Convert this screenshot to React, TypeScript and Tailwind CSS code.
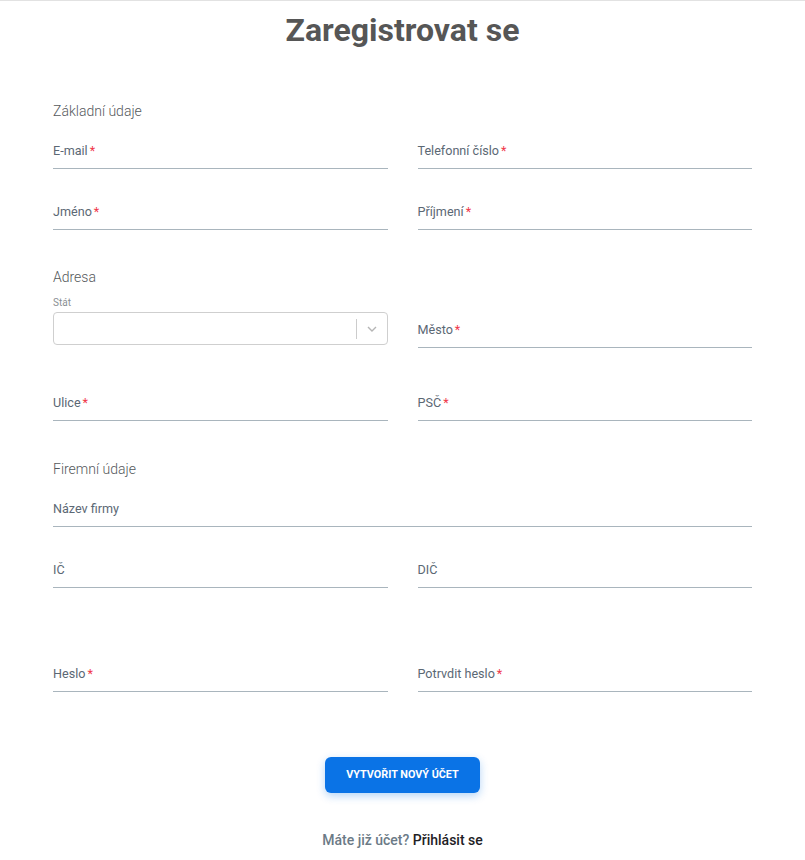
import React from 'react';

const font = { fontFamily: 'Roboto, "Noto Sans", sans-serif' };

const Field: React.FC<{ label: string; required?: boolean; className?: string }> = ({ label, required, className = '' }) => (
  <div className={`border-b border-[#a9b5bd] pt-[1px] pb-[7px] ${className}`}>
    <div className="text-[12.6px] leading-[20px] text-[#5b6874]">
      {label}
      {required && <span className="ml-[2px] text-[#f0384a]">*</span>}
    </div>
  </div>
);

const SectionTitle: React.FC<{ children: React.ReactNode; className?: string }> = ({ children, className = '' }) => (
  <div className={`text-[14px] leading-[20px] font-light text-[#55595c] ${className}`}>{children}</div>
);

export default function App() {
  return (
    <div className="min-h-[860px] bg-white" style={font}>
      <div className="h-px bg-[#e2e2e2]" />
      <h1 className="mt-[9px] text-center text-[32px] leading-[40px] font-bold text-[#565656]">Zaregistrovat se</h1>

      <div className="mx-auto w-[699px]">
        {/* Základní údaje */}
        <SectionTitle className="mt-[51px]">Základní údaje</SectionTitle>
        <div className="mt-[19px] grid grid-cols-2 gap-x-[30px]">
          <Field label="E-mail" required />
          <Field label="Telefonní číslo" required />
        </div>
        <div className="mt-[32px] grid grid-cols-2 gap-x-[30px]">
          <Field label="Jméno" required />
          <Field label="Příjmení" required />
        </div>

        {/* Adresa */}
        <SectionTitle className="mt-[37px]">Adresa</SectionTitle>
        <div className="grid grid-cols-2 gap-x-[30px]">
          <div className="pt-[9px]">
            <div className="text-[10px] leading-[14px] text-[#8a8f94]">Stát</div>
            <div className="mt-[2px] flex h-[33px] items-center justify-end rounded-[4px] border border-[#cfcfcf]">
              <div className="h-[20px] w-px bg-[#cccccc]" />
              <div className="flex w-[30px] justify-center">
                <svg width="12" height="8" viewBox="0 0 12 8" fill="none">
                  <path d="M2 2l4 4 4-4" stroke="#b5b5b5" strokeWidth="1.4" />
                </svg>
              </div>
            </div>
          </div>
          <Field label="Město" required className="mt-[32px]" />
        </div>
        <div className="mt-[44px] grid grid-cols-2 gap-x-[30px]">
          <Field label="Ulice" required />
          <Field label="PSČ" required />
        </div>

        {/* Firemní údaje */}
        <SectionTitle className="mt-[38px]">Firemní údaje</SectionTitle>
        <Field label="Název firmy" className="mt-[19px]" />
        <div className="mt-[32px] grid grid-cols-2 gap-x-[30px]">
          <Field label="IČ" />
          <Field label="DIČ" />
        </div>

        {/* Heslo */}
        <div className="mt-[75px] grid grid-cols-2 gap-x-[30px]">
          <Field label="Heslo" required />
          <Field label="Potrvdit heslo" required />
        </div>

        <div className="mt-[65px] flex justify-center">
          <button className="h-[36px] w-[155px] rounded-[6px] bg-[#0a73e6] text-[10.8px] font-bold text-white shadow-[0_3px_8px_rgba(10,115,230,0.3)]">
            VYTVOŘIT NOVÝ ÚČET
          </button>
        </div>

        <div className="mt-[37px] text-center text-[14px] leading-[20px] font-medium">
          <span className="text-[#6b7a86]">Máte již účet?</span> <span className="text-[#1e2125]">Přihlásit se</span>
        </div>
      </div>
    </div>
  );
}
